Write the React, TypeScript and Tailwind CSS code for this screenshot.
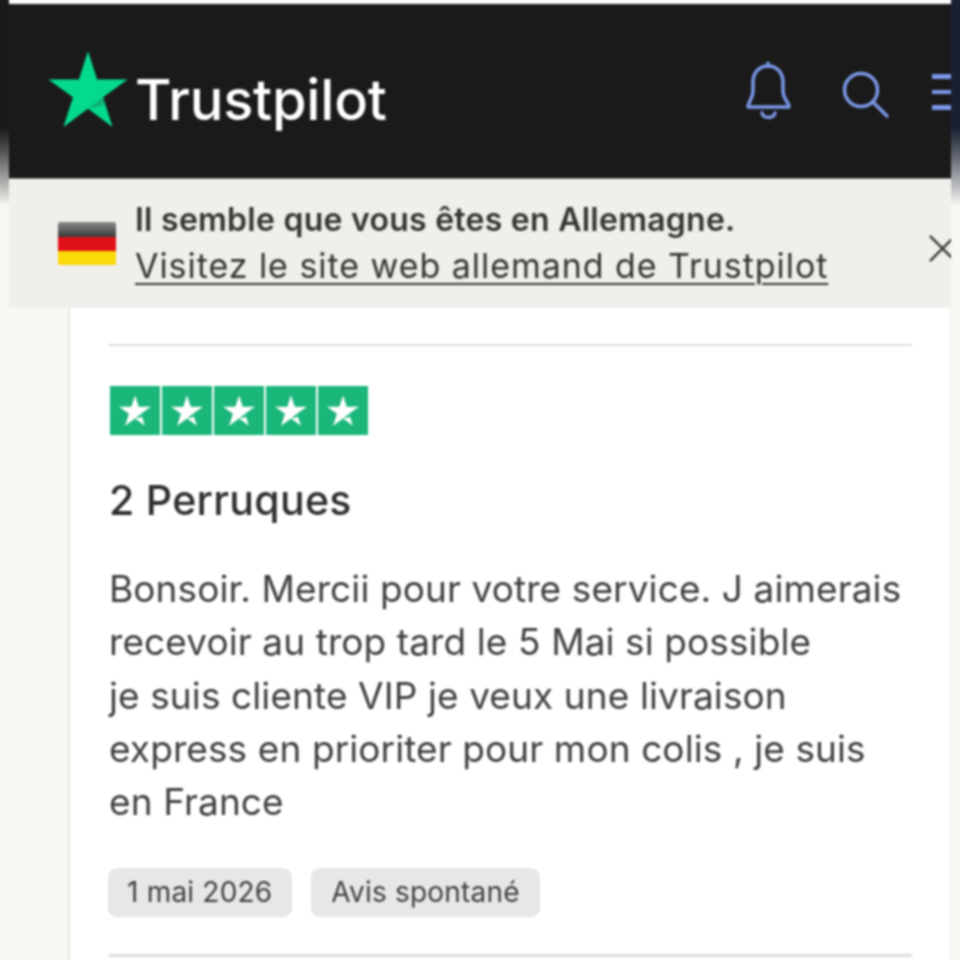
const F = { fontFamily: 'Inter, "Liberation Sans", sans-serif' };

function Star({ fill, cut }: { fill: string; cut: string }) {
  return (
    <svg viewBox="0 0 100 96" className="w-full h-full">
      <path d="M50 0 L61.5 36 L100 36 L69 58.5 L81 96 L50 73 L19 96 L31 58.5 L0 36 L38.5 36 Z" fill={fill} />
      <path d="M69 58.5 L72 68 L50 73 Z" fill={cut} />
    </svg>
  );
}

function Stars() {
  return (
    <div className="flex gap-[2px]">
      {[0, 1, 2, 3, 4].map((i) => (
        <div key={i} className="w-[50px] h-[49px] bg-[#1ab67a] flex items-center justify-center">
          <div className="w-[32px] h-[31px] mb-[1px]">
            <Star fill="#ffffff" cut="#1ab67a" />
          </div>
        </div>
      ))}
    </div>
  );
}

export default function App() {
  return (
    <div className="w-[960px] h-[960px] overflow-hidden" style={F}>
      <div className="w-[980px] h-[980px] -ml-[10px] -mt-[10px] flex bg-[#f9f8f4] blur-[0.8px]">
        <div className="w-[19px] h-full bg-gradient-to-b from-[#17191a] from-[14%] to-[#f8f7f3] to-[22%]" />
        <div className="w-[942px] h-full flex flex-col">
          <div className="h-[14px] bg-[#fbfbfb]" />
          <header className="h-[174px] shrink-0 bg-[#1a1a1a] flex items-start pl-[40px] overflow-hidden">
            <div className="w-[80px] h-[76px] mt-[47px] -ml-[1px]">
              <Star fill="#04da8d" cut="#0faf74" />
            </div>
            <span className="ml-[7px] mt-[62px] text-[56px] leading-[68px] font-medium text-white tracking-[-0.2px]">Trustpilot</span>
            <div className="ml-auto flex items-start">
              <svg width="48" height="62" viewBox="0 0 48 62" fill="none" stroke="#7b97e8" strokeWidth="3.5" strokeLinecap="round" strokeLinejoin="round" className="mt-[57px]">
                <path d="M24 2 V5" />
                <path d="M4 46 C4 41 9 38 9 30 V21 C9 12 15 5 24 5 C33 5 39 12 39 21 V30 C39 38 45 41 45 46 Z" />
                <path d="M18 52 C19 58 30 58 31 52" />
              </svg>
              <svg width="48" height="48" viewBox="0 0 48 48" fill="none" stroke="#7b97e8" strokeWidth="3.5" strokeLinecap="round" className="ml-[50px] mt-[67px]">
                <circle cx="19" cy="19" r="16.5" />
                <path d="M31 31 L45 45" />
              </svg>
              <div className="ml-[42px] mt-[70px] w-[19px] flex flex-col gap-[11px]">
                <div className="h-[5px] bg-[#7b97e8]" />
                <div className="h-[4px] bg-[#7b97e8]" />
                <div className="h-[5px] bg-[#7b97e8]" />
              </div>
            </div>
          </header>
          <div className="h-[130px] shrink-0 bg-[#f1efeb] flex items-start pl-[49px] border-t border-[#8c8b88] overflow-hidden">
            <div className="mt-[43px] w-[58px] h-[43px] rounded-[2px] overflow-hidden flex flex-col shrink-0">
              <div className="h-[15px] bg-gradient-to-b from-[#8a8a8a] to-[#3a3a3a]" />
              <div className="h-[14px] bg-[#e0101a]" />
              <div className="h-[14px] bg-[#fbd808]" />
            </div>
            <div className="ml-[19px] mt-[21px] text-[#353533]">
              <div className="text-[32px] leading-[40px] font-semibold tracking-[0.25px] whitespace-nowrap">Il semble que vous êtes en Allemagne.</div>
              <div className="text-[34px] leading-[51px] tracking-[0.95px] underline underline-offset-[5px] decoration-2 whitespace-nowrap">Visitez le site web allemand de Trustpilot</div>
            </div>
            <svg width="29" height="29" viewBox="0 0 30 30" fill="none" stroke="#3a3a38" strokeWidth="2.5" className="ml-auto mr-[-6px] mt-[55px] shrink-0">
              <path d="M2 2 L28 28 M28 2 L2 28" />
            </svg>
          </div>
          <div className="flex-1 pl-[59px] pr-[2px] flex flex-col">
            <main className="flex-1 bg-white border-l-2 border-[#e8e7e3] pl-[39px] pr-[37px] overflow-hidden">
              <div className="h-[2px] bg-[#dddcd8] mt-[36px]" />
              <div className="mt-[40px] pl-[1px]"><Stars /></div>
              <h2 className="mt-[36px] text-[41px] leading-[58px] font-medium text-[#2e2e2c] tracking-[0.3px]">2 Perruques</h2>
              <p className="mt-[33px] text-[37px] leading-[53.25px] text-[#3f3f3d] tracking-[0.1px] whitespace-nowrap">
                Bonsoir. Mercii pour votre service. J aimerais<br />
                recevoir au trop tard le 5 Mai si possible<br />
                je suis cliente VIP je veux une livraison<br />
                express en prioriter pour mon colis , je suis<br />
                en France
              </p>
              <div className="mt-[40px] -ml-[1px] flex gap-[19px] text-[28px] leading-[49px] text-[#3f3f3d] tracking-[0.2px]">
                <span className="h-[49px] pl-[19px] pr-[20px] rounded-[9px] bg-[#e7e7e6]">1 mai 2026</span>
                <span className="h-[49px] pl-[20px] pr-[20px] rounded-[9px] bg-[#e7e7e6]">Avis spontané</span>
              </div>
              <div className="h-[3px] bg-[#dddcd8] mt-[37px]" />
            </main>
          </div>
        </div>
        <div className="w-[19px] h-full bg-gradient-to-b from-[#1a2030] from-[14%] to-[#f8f7f3] to-[22%]" />
      </div>
    </div>
  );
}
